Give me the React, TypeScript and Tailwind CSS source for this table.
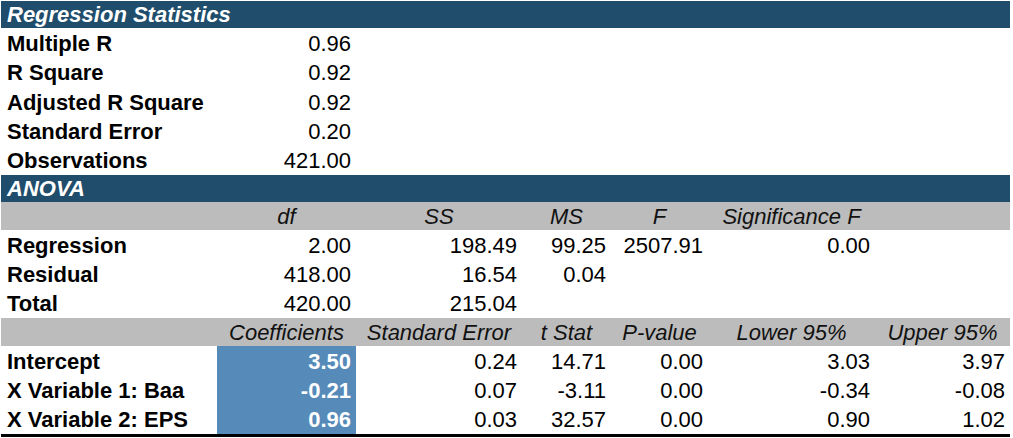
const cols = 'grid grid-cols-[216px_139px_166px_89px_97px_167px_135px]'

type Cell = string | undefined

function DataRow({ cells, highlight }: { cells: Cell[]; highlight?: boolean }) {
  return (
    <div className={`${cols} h-[29.33px]`}>
      {cells.map((c, i) => (
        <div
          key={i}
          className={
            i === 0
              ? 'flex items-center pl-[6px] pt-[3px] font-bold text-black whitespace-nowrap'
              : `flex items-center justify-end pr-[5px] pt-[3px] whitespace-nowrap ${
                  highlight && i === 1 ? 'bg-[#558ab9] text-white font-bold' : 'text-black'
                }`
          }
        >
          {c ?? ''}
        </div>
      ))}
    </div>
  )
}

function GrayHeader({ cells }: { cells: Cell[] }) {
  return (
    <div className={`${cols} h-[28px] bg-[#bcbcbc]`}>
      {cells.map((c, i) => (
        <div key={i} className="flex items-center justify-center pt-[2px] italic text-[#111] whitespace-nowrap">
          {c ?? ''}
        </div>
      ))}
    </div>
  )
}

function NavyBar({ title, h }: { title: string; h: string }) {
  return (
    <div className={`${h} bg-[#1f4d6b] flex items-center pl-[6px] pt-[1px] text-white font-bold italic`}>
      {title}
    </div>
  )
}

export default function App() {
  return (
    <div className="w-[1013px] h-[438px] bg-white pt-[1px] pl-[1px] overflow-hidden">
      <div
        className="w-[1009px] text-[22px] leading-none"
        style={{ fontFamily: '"Liberation Sans", Arial, sans-serif' }}
      >
        <NavyBar title="Regression Statistics" h="h-[27px]" />
        <DataRow cells={['Multiple R', '0.96']} />
        <DataRow cells={['R Square', '0.92']} />
        <DataRow cells={['Adjusted R Square', '0.92']} />
        <DataRow cells={['Standard Error', '0.20']} />
        <DataRow cells={['Observations', '421.00']} />
        <NavyBar title="ANOVA" h="h-[27px]" />
        <GrayHeader cells={['', 'df', 'SS', 'MS', 'F', 'Significance F', '']} />
        <DataRow cells={['Regression', '2.00', '198.49', '99.25', '2507.91', '0.00', '']} />
        <DataRow cells={['Residual', '418.00', '16.54', '0.04', '', '', '']} />
        <DataRow cells={['Total', '420.00', '215.04', '', '', '', '']} />
        <GrayHeader
          cells={['', 'Coefficients', 'Standard Error', 't Stat', 'P-value', 'Lower 95%', 'Upper 95%']}
        />
        <DataRow highlight cells={['Intercept', '3.50', '0.24', '14.71', '0.00', '3.03', '3.97']} />
        <DataRow highlight cells={['X Variable 1: Baa', '-0.21', '0.07', '-3.11', '0.00', '-0.34', '-0.08']} />
        <DataRow highlight cells={['X Variable 2: EPS', '0.96', '0.03', '32.57', '0.00', '0.90', '1.02']} />
        <div className="h-[3px] bg-black" />
      </div>
    </div>
  )
}
